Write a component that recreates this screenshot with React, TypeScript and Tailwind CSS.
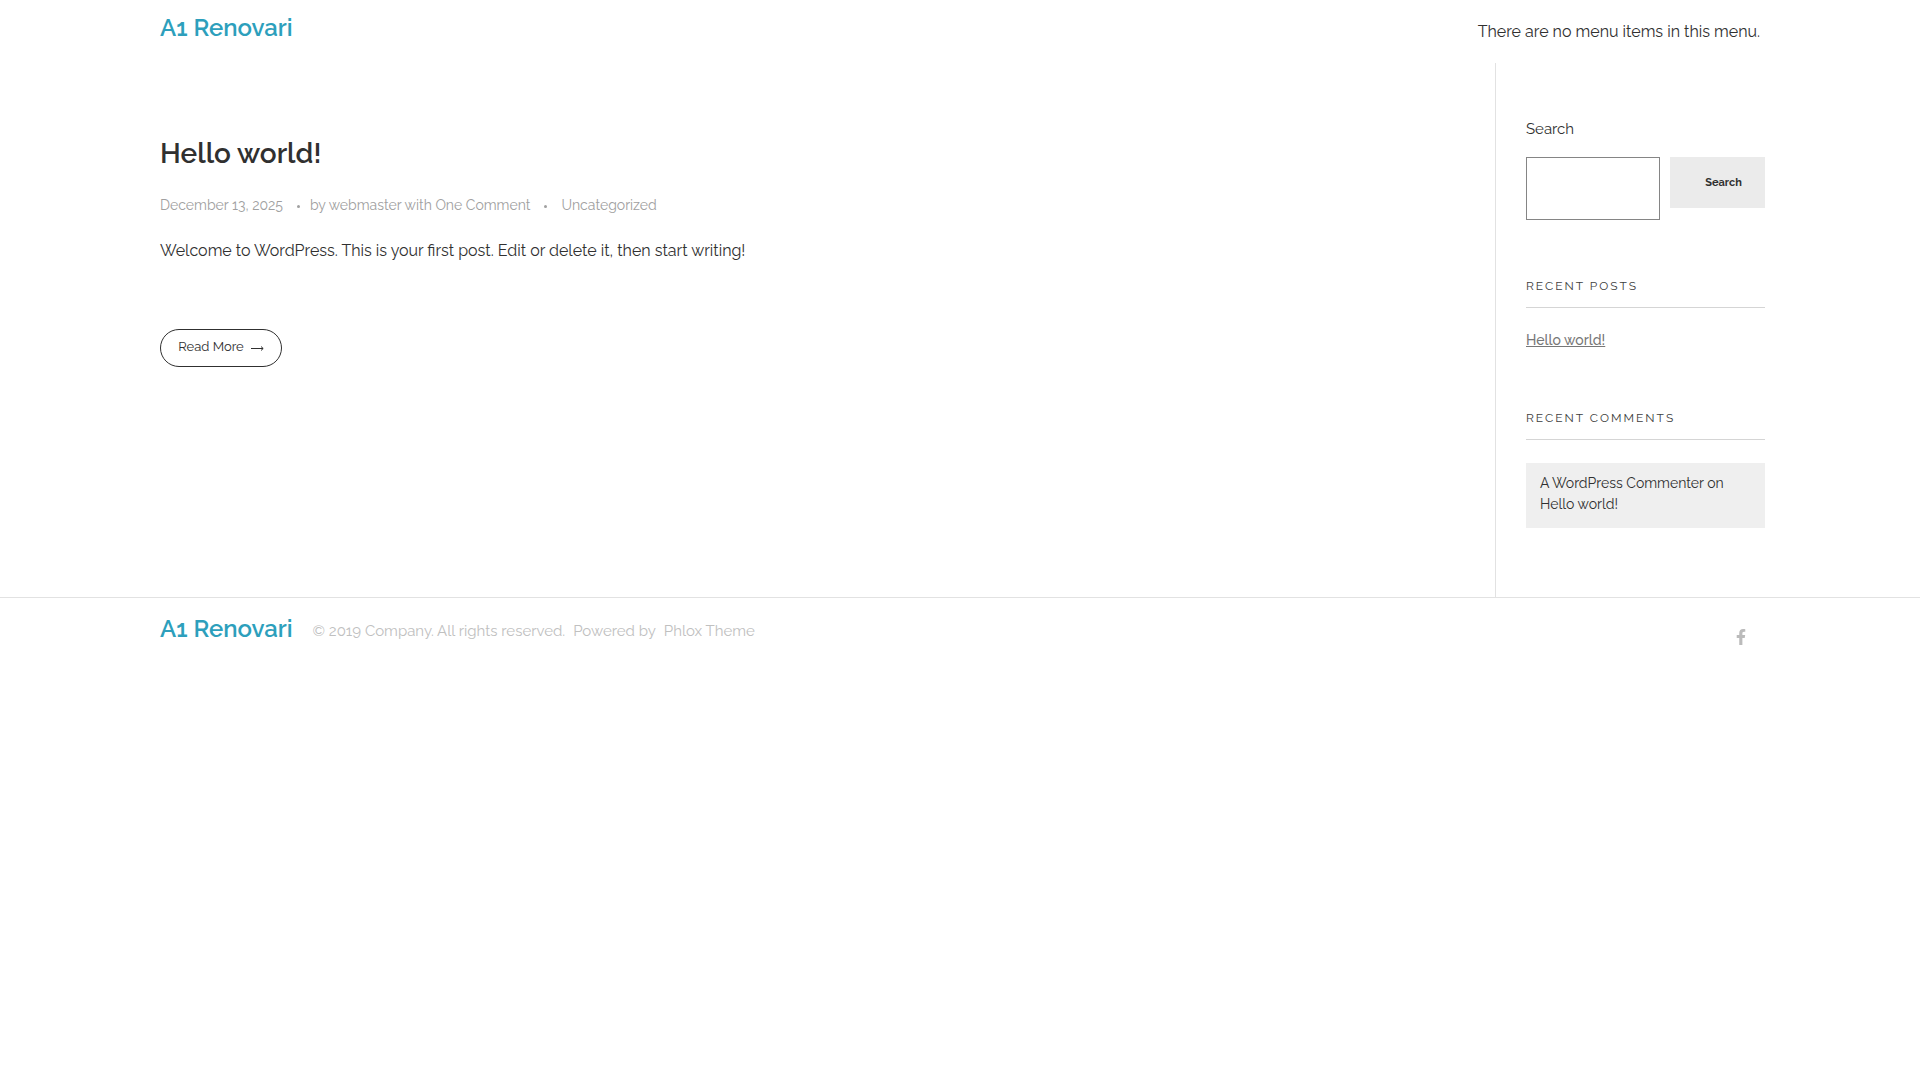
import type { ReactNode } from "react";
import { FaFacebookF } from "react-icons/fa";

function Logo() {
  return (
    <a href="#" className="text-2xl leading-8 font-semibold text-[#2d9fbc]">
      A1 Renovari
    </a>
  );
}

function Dot() {
  return <span className="mt-[3px] h-[3px] w-[3px] rounded-full bg-[#a0a0a0]" />;
}

function Widget({ title, children }: { title: string; children: ReactNode }) {
  return (
    <section>
      <h3 className="border-b border-[#d5d5d5] pb-[11px] text-xs leading-5 tracking-[2px] text-[#3d3d3d] uppercase">
        {title}
      </h3>
      {children}
    </section>
  );
}

function Sidebar() {
  return (
    <aside className="w-[270px] shrink-0 border-l border-[#e2e2e2] pt-[54px] pb-[69px] pl-[30px]">
      <form onSubmit={(e) => e.preventDefault()}>
        <label htmlFor="search" className="block text-[15px] leading-6 text-[#303030]">
          Search
        </label>
        <div className="mt-4 flex items-start gap-[10px]">
          <input id="search" type="search" className="h-[63px] min-w-0 flex-1 border border-[#858585] px-4" />
          <button
            type="submit"
            className="h-[51px] w-[95px] bg-[#ebebeb] pt-[2px] pl-3 text-[11px] font-bold text-[#303030]"
          >
            Search
          </button>
        </div>
      </form>

      <div className="mt-14 flex flex-col gap-14">
        <Widget title="Recent Posts">
          <a href="#" className="mt-5 block text-sm leading-6 font-medium text-[#777777] underline">
            Hello world!
          </a>
        </Widget>
        <Widget title="Recent Comments">
          <p className="mt-[23px] bg-[#efefef] px-[14px] pt-[10px] pb-[13px] text-sm leading-[21px] text-[#303030]">
            A WordPress Commenter on <a href="#">Hello world!</a>
          </p>
        </Widget>
      </div>
    </aside>
  );
}

export default function App() {
  return (
    <div className="bg-white font-['Raleway','Lato',sans-serif] text-[#303030]">
      <header className="flex h-[63px] items-start justify-between px-40 pt-3">
        <Logo />
        <p className="pt-2 text-base leading-6">There are no menu items in this menu.</p>
      </header>

      <div className="flex pr-[155px] pl-40">
        <main className="flex-1 pt-[71px]">
          <article>
            <h2 className="text-[28px] leading-10 font-semibold">
              <a href="#">Hello world!</a>
            </h2>
            <div className="mt-[19px] flex items-center text-sm leading-6 text-[#a0a0a0]">
              <a href="#">December 13, 2025</a>
              <span className="flex pr-[10px] pl-[14px]">
                <Dot />
              </span>
              <span>
                by <a href="#">webmaster</a> with <a href="#">One Comment</a>
              </span>
              <span className="flex px-[14px]">
                <Dot />
              </span>
              <a href="#">Uncategorized</a>
            </div>
            <p className="mt-[22px] text-base leading-6">
              Welcome to WordPress. This is your first post. Edit or delete it, then start writing!
            </p>
            <a
              href="#"
              className="mt-[66px] flex h-[38px] w-[122px] items-center justify-center gap-[6px] rounded-full border border-[#303030] pb-[2px] text-[13px]"
            >
              Read More
              <svg viewBox="0 0 14 8" className="mt-[2px] h-2 w-[14px]" fill="none" stroke="currentColor">
                <path d="M1 4.5H13M11 2.5L13.2 4.5L11 6.5" />
              </svg>
            </a>
          </article>
        </main>
        <Sidebar />
      </div>

      <footer className="flex items-start justify-between border-t border-[#e2e2e2] pt-[15px] pr-[171px] pl-40">
        <div className="flex items-start gap-5">
          <Logo />
          <p className="flex gap-2 pt-[6px] text-[15px] leading-6 text-[#c0c0c0]">
            <span>© 2019 Company. All rights reserved.</span>
            <span>Powered by</span>
            <a href="#">Phlox Theme</a>
          </p>
        </div>
        <a href="#" aria-label="Facebook" className="mt-4 text-[#bbbbbb]">
          <FaFacebookF size={16} />
        </a>
      </footer>
    </div>
  );
}
